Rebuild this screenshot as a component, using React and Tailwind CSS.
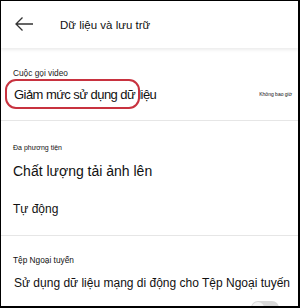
import React from 'react';

const Divider = () => <div className="h-px bg-[#e6e6e6]" />;

export default function App() {
  return (
    <div
      className="relative w-[300px] h-[308px] overflow-hidden bg-white border-t border-l border-r-2 border-b-2 border-black text-[#111]"
      style={{ fontFamily: '"Liberation Sans", Arial, sans-serif' }}
    >
      {/* Header */}
      <div className="h-[47px] flex items-center shadow-[0_2px_3px_rgba(0,0,0,0.08)] relative z-10">
        <svg width="20" height="16" viewBox="0 0 20 16" className="ml-[13px] mt-[-2px]" fill="none" stroke="#333" strokeWidth="1.3">
          <path d="M19 8H2M8.5 1.5L2 8l6.5 6.5" />
        </svg>
        <span className="ml-[26px] text-[11.5px] mt-[2px]">Dữ liệu và lưu trữ</span>
      </div>

      {/* Video calls */}
      <div className="px-[12px] pt-[21px]">
        <div className="text-[8.3px] text-[#222] leading-none">Cuộc gọi video</div>
        <div className="flex items-center justify-between mt-[2px] h-[30px] relative">
          <span className="text-[13px] tracking-[-0.55px] pl-[1px] mt-[1px]">Giảm mức sử dụng dữ liệu</span>
          <span className="text-[5px] mr-[-6px]">Không bao giờ</span>
          <div className="absolute left-[-8px] top-[0px] w-[135px] h-[30px] border-2 border-[#c8323f] rounded-[11px]" />
        </div>
      </div>
      <div className="mt-[11px]">
        <Divider />
      </div>

      {/* Media */}
      <div className="px-[12px] pt-[23px]">
        <div className="text-[7px] leading-none">Đa phương tiện</div>
        <div className="text-[14px] mt-[13px] leading-none">Chất lượng tải ảnh lên</div>
        <div className="text-[12px] mt-[25px] leading-none">Tự động</div>
      </div>
      <div className="mt-[20px]">
        <Divider />
      </div>

      {/* Offline files */}
      <div className="px-[12px] pt-[20px]">
        <div className="text-[8.3px] leading-none">Tệp Ngoại tuyến</div>
        <div className="text-[12px] mt-[12px] leading-none whitespace-nowrap pl-[1px]">Sử dụng dữ liệu mạng di động cho Tệp Ngoại tuyến</div>
      </div>
      <div className="absolute left-[250px] top-[300px] w-[28px] h-[14px] rounded-full bg-[#d9d9d9]">
        <div className="absolute left-[1px] top-[1px] w-[12px] h-[12px] rounded-full bg-[#f4f4f4]" />
      </div>
    </div>
  );
}
